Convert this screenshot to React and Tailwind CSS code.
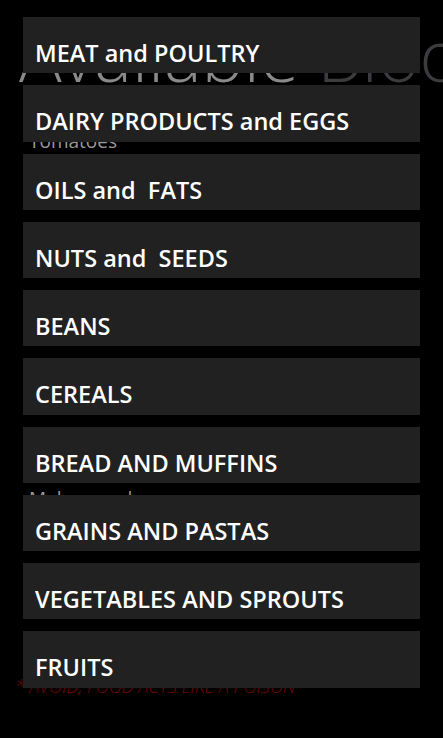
import React from "react";

const categories = [
  "MEAT and POULTRY",
  "DAIRY PRODUCTS and EGGS",
  "OILS and  FATS",
  "NUTS and  SEEDS",
  "BEANS",
  "CEREALS",
  "BREAD AND MUFFINS",
  "GRAINS AND PASTAS",
  "VEGETABLES AND SPROUTS",
  "FRUITS",
];

export default function App() {
  return (
    <div
      className="relative w-[443px] h-[738px] overflow-hidden bg-black"
      style={{ fontFamily: '"Open Sans", "Noto Sans", sans-serif' }}
    >
      {/* page underneath the picker */}
      <div className="pt-[19px]">
        <h1 className="pl-[19px] whitespace-nowrap text-[71px] leading-none font-light">
          <span className="text-[#8a8a8a]">Available </span>
          <span className="text-[#3e3b3e]">Blood</span>
        </h1>
        <p className="mt-[42px] pl-[29px] text-[19px] leading-none text-[#9a9a9a]">Tomatoes</p>
        <p className="mt-[338px] pl-[29px] text-[19px] leading-none text-[#9a9a9a]">Melons and grapes</p>
        <p className="mt-[169px] pl-[15px] text-[18px] leading-none italic font-light text-[#740606]">
          * AVOID, FOOD ACTS LIKE A POISON
        </p>
      </div>

      {/* category picker overlay */}
      <ul className="absolute inset-x-0 top-[17px] flex flex-col gap-[12px] px-[23px]">
        {categories.map((name) => (
          <li
            key={name}
            className="h-[56.25px] bg-[#212121] pl-[12px] pt-[25px] text-[23.5px] leading-none font-semibold text-white whitespace-pre"
          >
            {name}
          </li>
        ))}
      </ul>
    </div>
  );
}
